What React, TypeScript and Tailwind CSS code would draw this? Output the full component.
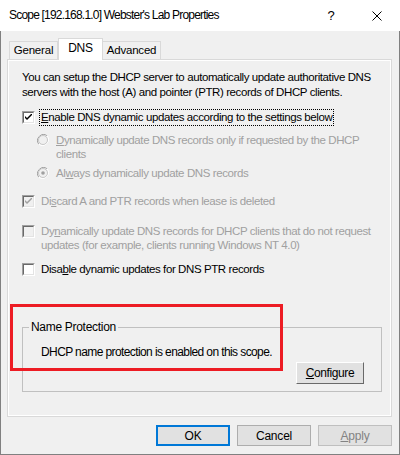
import React from 'react';

const font = { fontFamily: '"Liberation Sans", Arial, sans-serif' };

function CheckBox({ checked, disabled }: { checked?: boolean; disabled?: boolean }) {
  return (
    <div className="w-[13px] h-[13px] shrink-0 border border-t-[#a0a0a0] border-l-[#a0a0a0] border-b-white border-r-white">
      <div
        className={`w-[11px] h-[11px] border border-t-[#696969] border-l-[#696969] border-b-[#e3e3e3] border-r-[#e3e3e3] flex items-center justify-center ${
          disabled ? 'bg-[#f0f0f0]' : 'bg-white'
        }`}
      >
        {checked && (
          <svg width="7" height="7" viewBox="0 0 7 7">
            <path d="M0 2 L0 4 L2 6 L7 1 L7 -1 L2 4 Z" fill={disabled ? '#a0a0a0' : '#000'} />
          </svg>
        )}
      </div>
    </div>
  );
}

function Radio({ checked }: { checked?: boolean }) {
  return (
    <svg width="12" height="12" viewBox="0 0 12 12" className="shrink-0">
      <path d="M10.2 1.8 A6 6 0 0 0 1.8 10.2" stroke="#a0a0a0" fill="none" />
      <path d="M1.8 10.2 A6 6 0 0 0 10.2 1.8" stroke="#ffffff" fill="none" />
      <circle cx="6" cy="6" r="4.5" fill="#f0f0f0" stroke="#c8c8c8" />
      {checked && <circle cx="6" cy="6" r="1.8" fill="#a0a0a0" />}
    </svg>
  );
}

function Button({ children, className = '' }: { children: React.ReactNode; className?: string }) {
  return (
    <div className={`h-[21px] w-[74px] flex items-center justify-center border bg-[#e1e1e1] text-[12px] tracking-[-0.2px] ${className}`}>
      {children}
    </div>
  );
}

export default function App() {
  const gray = 'text-[#a0a0a0]';
  return (
    <div
      className="w-[400px] h-[455px] overflow-hidden bg-[#f0f0f0] relative text-[11.5px] tracking-[-0.4px] text-black whitespace-nowrap"
      style={font}
    >
      {/* title bar */}
      <div className="h-[31px] bg-white flex items-center">
        <div className="pl-[9px] text-[12px] tracking-[-0.8px] pb-[1px]">Scope [192.168.1.0] Webster's Lab Properties</div>
        <div className="ml-auto w-[46px] text-center text-[13px]">?</div>
        <div className="w-[46px] flex justify-center">
          <svg width="10" height="10" viewBox="0 0 10 10">
            <path d="M0.5 0.5 L9.5 9.5 M9.5 0.5 L0.5 9.5" stroke="#000" strokeWidth="1" />
          </svg>
        </div>
      </div>

      <div className="h-[424px] border-l border-r border-b border-[#808080] flex flex-col">
        {/* tabs */}
        <div className="h-[28px] flex items-end pl-[8px] relative z-10 tracking-[-0.2px]">
          <div className="h-[18px] w-[49px] border border-b-0 border-[#d9d9d9] flex items-center justify-center">
            General
          </div>
          <div className="h-[22px] w-[45px] border border-b-0 border-[#d9d9d9] bg-white flex items-center justify-center -mb-[1px] pb-[3px] text-[12px]">
            DNS
          </div>
          <div className="h-[18px] w-[58px] border border-b-0 border-l-0 border-[#d9d9d9] flex items-center justify-center">
            Advanced
          </div>
        </div>

        {/* tab page */}
        <div className="ml-[6px] w-[385px] h-[358px] border border-[#d9d9d9]">
          <div className="h-full border border-white flex flex-col pl-[13px]">
            <div className="mt-[9px] leading-[15px]">
              You can setup the DHCP server to automatically update authoritative DNS
              <br />
              servers with the host (A) and pointer (PTR) records of DHCP clients.
            </div>

            <div className="mt-[9px] flex items-center h-[17px]">
              <CheckBox checked />
              <div className="ml-[4px] border border-dotted border-black px-[1px] leading-[15px]">
                <span className="underline">E</span>nable DNS dynamic updates according to the settings below
              </div>
            </div>

            <div className={`mt-[7px] flex ${gray} leading-[14px] pl-[15px]`}>
              <div className="mt-[1px]">
                <Radio />
              </div>
              <div className="ml-[7px]">
                <span className="underline">D</span>ynamically update DNS records only if requested by the DHCP
                <br />
                clients
              </div>
            </div>

            <div className={`mt-[5px] flex items-center ${gray} leading-[14px] pl-[15px]`}>
              <Radio checked />
              <div className="ml-[7px]">
                Al<span className="underline">w</span>ays dynamically update DNS records
              </div>
            </div>

            <div className={`mt-[14px] flex items-center ${gray} leading-[14px]`}>
              <CheckBox checked disabled />
              <div className="ml-[6px]">
                Di<span className="underline">s</span>card A and PTR records when lease is deleted
              </div>
            </div>

            <div className={`mt-[16px] flex ${gray} leading-[14px]`}>
              <div className="mt-[1px]">
                <CheckBox disabled />
              </div>
              <div className="ml-[6px]">
                Dy<span className="underline">n</span>amically update DNS records for DHCP clients that do not request
                <br />
                updates (for example, clients running Windows NT 4.0)
              </div>
            </div>

            <div className="mt-[10px] flex items-center leading-[14px]">
              <CheckBox />
              <div className="ml-[6px]">
                Disa<span className="underline">b</span>le dynamic updates for DNS PTR records
              </div>
            </div>

            {/* group box */}
            <div className="mt-[51px] w-[360px] h-[65px] border border-[#c0c0c0] relative flex flex-col">
              <div className="absolute -top-[8px] left-[6px] px-[2px] bg-[#f0f0f0] leading-[14px] text-[12px] tracking-[-0.3px]">
                Name Protection
              </div>
              <div className="mt-[17px] pl-[18px] leading-[14px] text-[12px] tracking-[-0.6px]">
                DHCP name protection is enabled on this scope.
              </div>
              <div className="mt-[3px] self-end mr-[17px] h-[22px] w-[68px] border border-t-white border-l-white border-b-[#696969] border-r-[#696969] bg-[#e1e1e1] flex items-center justify-center text-[12px]">
                <span>
                  <span className="underline">C</span>onfigure
                </span>
              </div>
            </div>
          </div>
        </div>

        {/* dialog buttons */}
        <div className="mt-[8px] flex justify-end pr-[7px] gap-[7px]">
          <Button className="border-2 border-[#0078d7] text-black">OK</Button>
          <Button className="border-[#adadad] text-black">Cancel</Button>
          <Button className="bg-[#cccccc] border-[#bfbfbf] text-[#838383]">
            <span>
              <span className="underline">A</span>pply
            </span>
          </Button>
        </div>
      </div>

      {/* red highlight */}
      <div className="absolute left-[10px] top-[304px] w-[273px] h-[67px] border-[3px] border-[#ed1c24]" />
    </div>
  );
}
